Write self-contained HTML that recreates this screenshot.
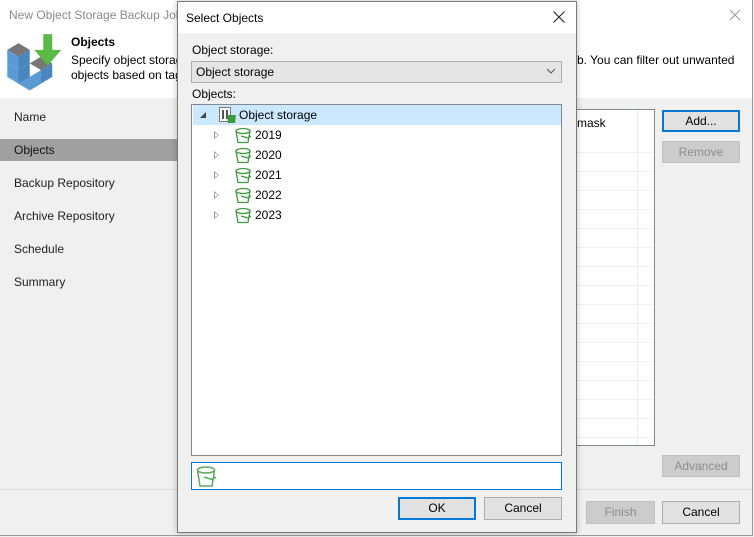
<!DOCTYPE html>
<html><head><style>
body{margin:0;width:754px;height:537px;overflow:hidden;background:#f0f0f0;font-family:"Liberation Sans",sans-serif;font-size:12px;color:#000;position:relative}
.a{position:absolute}
.btn{position:absolute;background:#e1e1e1;border:1px solid #adadad;box-sizing:border-box;text-align:center;line-height:20px;font-size:12px}
.dis{background:#cccccc;border-color:#bfbfbf;color:#8d8d8d}
.nav{position:absolute;left:0;width:177px;height:22px;line-height:22px;padding-left:14px;box-sizing:border-box;color:#222}
.row{position:absolute;left:1px;width:368px;height:20px;line-height:20px}
.tri{position:absolute;left:21px;top:6px;width:0;height:0;border-left:5px solid #a0a0a0;border-top:4px solid transparent;border-bottom:4px solid transparent}
.tri:after{content:"";position:absolute;left:-4px;top:-2px;border-left:3px solid #fff;border-top:2px solid transparent;border-bottom:2px solid transparent}
</style></head><body>
<div class="a" style="left:0;top:0;width:752px;height:535px;border:1px solid #9a9a9a;border-top:none;border-left:none"></div>
<div class="a" style="left:0;top:0;width:752px;height:98px;background:#fff"></div>
<div class="a" style="left:9px;top:8px;color:#8a8a8a;font-size:12px">New Object Storage Backup Job</div>
<svg class="a" style="left:728px;top:8px" width="14" height="14"><path d="M2 2L12 12M12 2L2 12" stroke="#999" stroke-width="1"/></svg>
<svg class="a" style="left:5px;top:33px" width="60" height="60" viewBox="0 0 56 54">
<g transform="scale(1.05)">
<polygon points="2,14 12,8 22,14 12,20" fill="#777"/>
<polygon points="2,14 12,20 12,32 2,26" fill="#5b9bd5"/>
<polygon points="12,20 22,14 22,26 12,32" fill="#4a86be"/>
<polygon points="2,26 12,32 12,44 2,38" fill="#5b9bd5"/>
<polygon points="12,32 22,26 22,38 12,44" fill="#4a86be"/>
<polygon points="22,26 32,20 42,26 32,32" fill="#777"/>
<polygon points="12,44 22,38 32,44 22,50" fill="#777"/>
<polygon points="22,38 32,32 32,44 22,50" fill="#5b9bd5"/>
<polygon points="32,32 42,26 42,38 32,44" fill="#4a86be"/>
<polygon points="22,38 32,44 22,50 12,44" fill="#5b9bd5"/>
<polygon points="34,0 42,0 42,14 50,14 38,28 26,14 34,14" fill="#5bb946"/>
</g>
</svg>
<div class="a" style="left:71px;top:35px;font-weight:bold">Objects</div>
<div class="a" style="left:71px;top:53px;line-height:15px">Specify object storage<br>objects based on tag</div>
<div class="a" style="left:577px;top:53px;line-height:15px">b. You can filter out unwanted</div>
<div class="nav" style="top:106px">Name</div>
<div class="nav" style="top:139px;background:#a0a0a0;color:#111">Objects</div>
<div class="nav" style="top:172px">Backup Repository</div>
<div class="nav" style="top:205px">Archive Repository</div>
<div class="nav" style="top:238px">Schedule</div>
<div class="nav" style="top:271px">Summary</div>
<div class="a" style="left:560px;top:109px;width:95px;height:337px;background:#fff;border:1px solid #828790;box-sizing:border-box;background-image:repeating-linear-gradient(#fff 0,#fff 18px,#f0f0f0 18px,#f0f0f0 19px);background-position:0 24px"></div>
<div class="a" style="left:561px;top:110px;width:93px;height:24px;background:#fff"></div>
<div class="a" style="left:577px;top:116px">mask</div>
<div class="a" style="left:637px;top:110px;width:1px;height:335px;background:#e6eefa"></div>
<div class="btn" style="left:662px;top:110px;width:78px;height:22px;border:2px solid #0078d7;line-height:18px">Add...</div>
<div class="btn dis" style="left:662px;top:141px;width:78px;height:22px">Remove</div>
<div class="btn dis" style="left:662px;top:455px;width:78px;height:22px">Advanced</div>
<div class="a" style="left:0;top:489px;width:752px;height:1px;background:#dcdcdc"></div>
<div class="btn dis" style="left:586px;top:501px;width:69px;height:23px">Finish</div>
<div class="btn" style="left:662px;top:501px;width:78px;height:23px">Cancel</div>
<div class="a" style="left:177px;top:1px;width:400px;height:532px;background:#f0f0f0;border:1px solid #7a7a7a;box-sizing:border-box;box-shadow:0 0 6px rgba(0,0,0,.25)"></div>
<div class="a" style="left:178px;top:2px;width:398px;height:31px;background:#fff"></div>
<div class="a" style="left:186px;top:11px">Select Objects</div>
<svg class="a" style="left:552px;top:10px" width="14" height="14"><path d="M1.5 1.5L12.5 12.5M12.5 1.5L1.5 12.5" stroke="#222" stroke-width="1.1"/></svg>
<div class="a" style="left:192px;top:43px">Object storage:</div>
<div class="a" style="left:191px;top:61px;width:371px;height:22px;background:#e5e5e5;border:1px solid #adadad;box-sizing:border-box"></div>
<div class="a" style="left:196px;top:65px">Object storage</div>
<svg class="a" style="left:546px;top:68px" width="10" height="6"><path d="M1 1L5 5L9 1" stroke="#555" fill="none"/></svg>
<div class="a" style="left:192px;top:87px">Objects:</div>
<div class="a" style="left:191px;top:104px;width:371px;height:352px;background:#fff;border:1px solid #828790;box-sizing:border-box">
 <div class="row" style="top:0;background:#cce8ff">
  <svg class="a" style="left:7px;top:7px" width="7" height="7"><polygon points="6,0 6,6 0,6" fill="#444"/></svg>
  <svg class="a" style="left:26px;top:2px" width="18" height="17"><rect x="0.5" y="0.5" width="11" height="14" fill="#fff" stroke="#777"/><rect x="3" y="3" width="2" height="9" fill="#555"/><rect x="7" y="3" width="2" height="9" fill="#555"/><path d="M8 8H17L16 16H9Z" fill="#3b9a3b"/></svg>
  <span class="a" style="left:46px">Object storage</span>
 </div>
 <div class="row" style="top:20px"><div class="tri"></div><svg class="a" style="left:42px;top:2px" width="18" height="17"><ellipse cx="8" cy="4" rx="7" ry="2.5" fill="none" stroke="#3f9a3f" stroke-width="1.3"/><path d="M1 4L3 15.5H13L15 4M6 9L13 11L16 9" fill="none" stroke="#3f9a3f" stroke-width="1.3"/></svg><span class="a" style="left:62px">2019</span></div>
 <div class="row" style="top:40px"><div class="tri"></div><svg class="a" style="left:42px;top:2px" width="18" height="17"><ellipse cx="8" cy="4" rx="7" ry="2.5" fill="none" stroke="#3f9a3f" stroke-width="1.3"/><path d="M1 4L3 15.5H13L15 4M6 9L13 11L16 9" fill="none" stroke="#3f9a3f" stroke-width="1.3"/></svg><span class="a" style="left:62px">2020</span></div>
 <div class="row" style="top:60px"><div class="tri"></div><svg class="a" style="left:42px;top:2px" width="18" height="17"><ellipse cx="8" cy="4" rx="7" ry="2.5" fill="none" stroke="#3f9a3f" stroke-width="1.3"/><path d="M1 4L3 15.5H13L15 4M6 9L13 11L16 9" fill="none" stroke="#3f9a3f" stroke-width="1.3"/></svg><span class="a" style="left:62px">2021</span></div>
 <div class="row" style="top:80px"><div class="tri"></div><svg class="a" style="left:42px;top:2px" width="18" height="17"><ellipse cx="8" cy="4" rx="7" ry="2.5" fill="none" stroke="#3f9a3f" stroke-width="1.3"/><path d="M1 4L3 15.5H13L15 4M6 9L13 11L16 9" fill="none" stroke="#3f9a3f" stroke-width="1.3"/></svg><span class="a" style="left:62px">2022</span></div>
 <div class="row" style="top:100px"><div class="tri"></div><svg class="a" style="left:42px;top:2px" width="18" height="17"><ellipse cx="8" cy="4" rx="7" ry="2.5" fill="none" stroke="#3f9a3f" stroke-width="1.3"/><path d="M1 4L3 15.5H13L15 4M6 9L13 11L16 9" fill="none" stroke="#3f9a3f" stroke-width="1.3"/></svg><span class="a" style="left:62px">2023</span></div>
</div>
<div class="a" style="left:191px;top:462px;width:371px;height:28px;background:#fff;border:1px solid #0078d7;box-sizing:border-box">
 <svg class="a" style="left:4px;top:2px" width="22" height="23"><ellipse cx="10" cy="5" rx="8.5" ry="3" fill="none" stroke="#5aab5a" stroke-width="1.5"/><path d="M1.5 5L4 21H16L18.5 5M8 12L16 14.5L20 12" fill="none" stroke="#5aab5a" stroke-width="1.5"/></svg>
</div>
<div class="btn" style="left:398px;top:497px;width:78px;height:23px;border:2px solid #0078d7;line-height:19px">OK</div>
<div class="btn" style="left:484px;top:497px;width:78px;height:23px">Cancel</div>
</body></html>
